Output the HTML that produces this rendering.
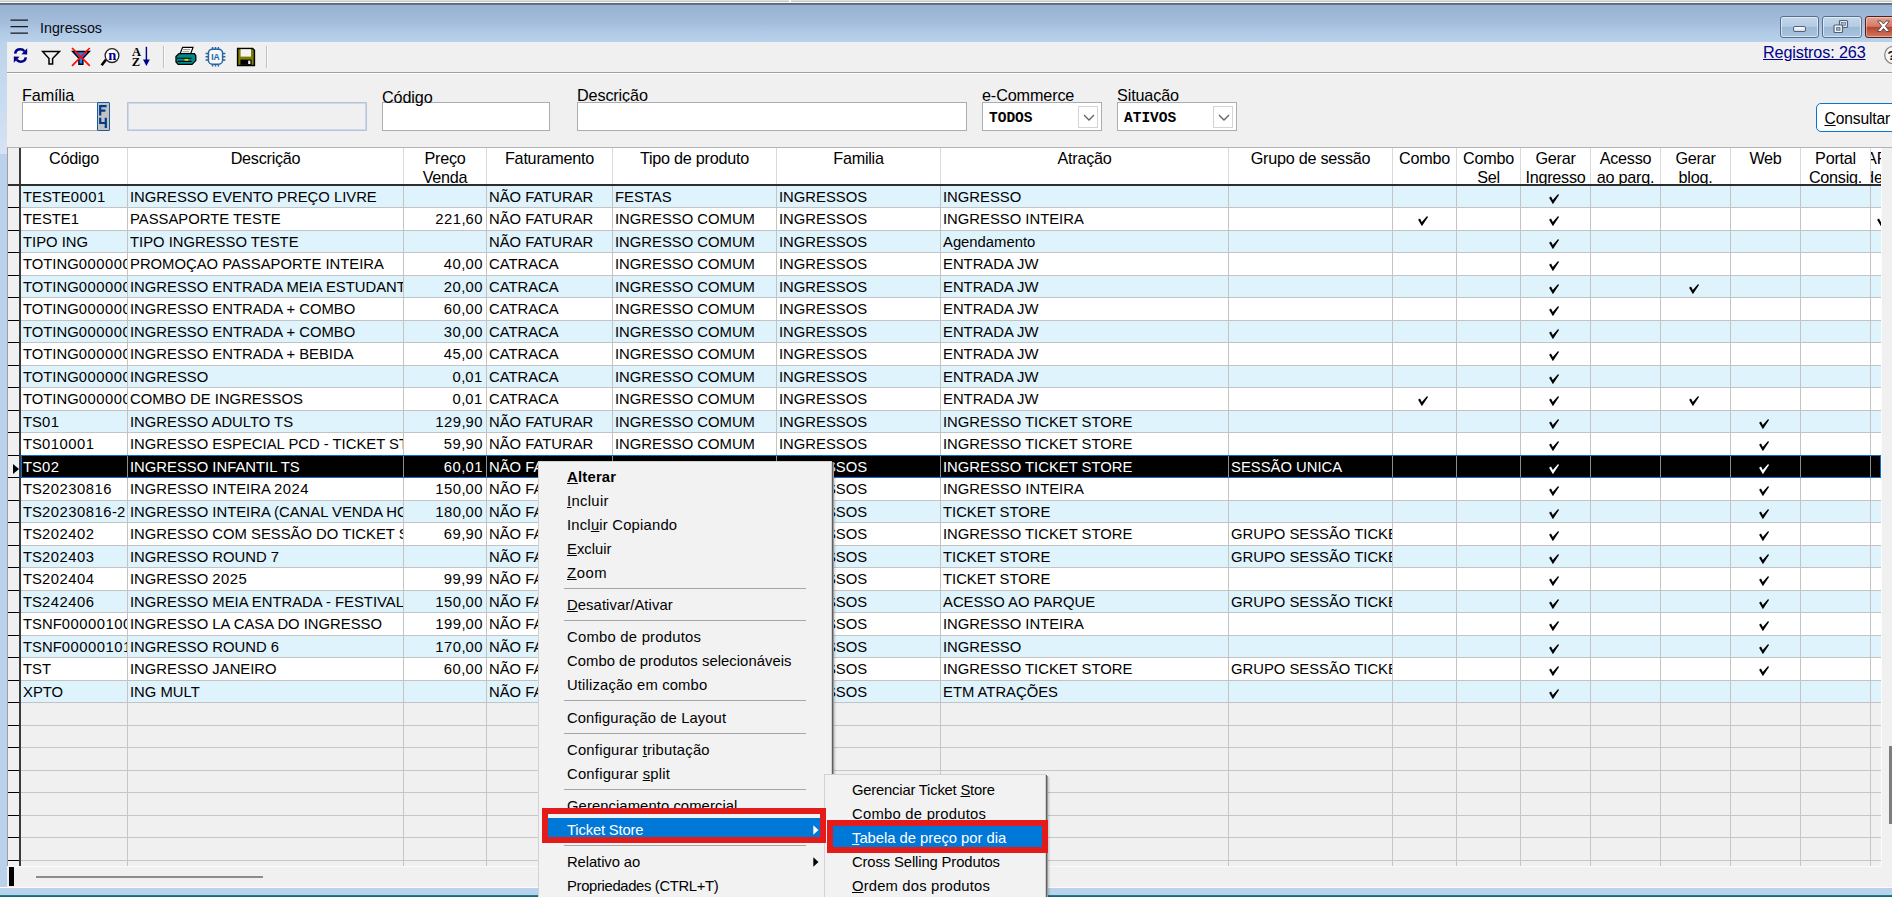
<!DOCTYPE html>
<html lang="pt-BR"><head><meta charset="utf-8"><title>Ingressos</title>
<style>
*{box-sizing:border-box;margin:0;padding:0}
html,body{width:1892px;height:897px;overflow:hidden}
body{position:relative;background:#b9d1ea;font-family:"Liberation Sans",sans-serif;color:#000}
.abs,.abs>*{position:absolute}
#top0{left:0;top:0;width:1892px;height:5px;background:linear-gradient(#e2e2e2 0,#dcdcdc 1px,#c4c4c4 1.6px,#fafafa 2px,#fafafa 3px,#5f6a76 3.2px,#5f6a76 4.4px,#8fa9c6 5px)}
#topdiv{left:789px;top:0;width:2px;height:3px;background:#fff}
#title{left:0;top:5px;width:1892px;height:37px;background:linear-gradient(#98b3d2 0,#a2bcda 45%,#b0cae6 75%,#b9d1ea 100%)}
#ttext{left:40px;top:19px;font-size:14.3px;line-height:18px;color:#0a0a14;white-space:nowrap}
#client{left:7px;top:42px;width:1885px;height:845px;background:#f0f0f0}
#tbline{left:7px;top:72px;width:1885px;height:2px;background:linear-gradient(#a0a0a0 0,#a0a0a0 50%,#fff 50%)}
.lbl{font-size:16.2px;letter-spacing:-.13px;line-height:18px;white-space:nowrap;color:#000}
.inp{background:#fff;border:1px solid #abadb3}
.cb{background:#fff;border:1px solid #abadb3}
.cb b{position:absolute;left:6px;top:6px;font:bold 14.5px/18px "Liberation Mono",monospace}
.cb i{position:absolute;right:3px;top:3px;width:20px;height:22px;border:1px solid #d4d4d4;background:#fff}
.cb i svg{position:absolute;left:4px;top:7px}
#grid{left:7px;top:147px;width:1875px;height:720px;background:#f0f0f0;overflow:hidden;border-left:1px solid #a0a0a0;border-top:1px solid #b4b4b4}
.hd{top:148px;height:36px;background:#fff;border-right:1px solid #d9d9d9;font-size:16.2px;letter-spacing:-.25px;line-height:18.5px;text-align:center;padding-top:1px;white-space:nowrap;overflow:hidden}
.r{left:21px;width:1860px;height:23px}
.c{position:absolute;top:0;height:100%;border-right:1px solid #c3c3c3;border-bottom:1px solid #c3c3c3;font-size:15.5px;line-height:22px;padding-left:2px;white-space:nowrap;overflow:hidden}
.c.n{text-align:right;padding-right:3px}
.c.k{text-align:center;padding:0}
.c i{font-style:normal;letter-spacing:.54px}
.c>span{display:inline-block;transform:scaleX(.956);transform-origin:0 50%}
.c.n>span{transform-origin:100% 50%}
.b .c{background:#dff3fd}
.w .c{background:#fff}
.e .c{background:#f0f0f0;border-color:#c6c6c6}
.s .c{background:#000;color:#fff;border-color:#000;border-right-color:#8e8e8e}
.ck{width:10px;height:10px;margin:8px 4px 0 0;fill:#000}
.s .ck{fill:#fff}
.ind{left:8px;width:11px;height:1px;background:#000}
.menu{background:#f2f2f2;border:1px solid #d2d2d2;box-shadow:1px 1px 0 0 #5f5f5f, 2px 2px 0 0 #9a9a9a, 3px 3px 2px rgba(0,0,0,.2)}
.mi{position:absolute;left:28px;height:24px;font-size:14.8px;line-height:24px;white-space:nowrap;color:#000}
.mi u{text-decoration:underline;text-underline-offset:1px}
.ms{position:absolute;left:25px;height:1px;background:#a6a6a6}
.red{border:6px solid #e41b1b}
</style></head><body class="abs">
<div id="top0"></div><div id="topdiv"></div>
<div id="title"></div>
<svg style="left:10px;top:19px" width="19" height="16" viewBox="0 0 19 16"><path d="M0.5,1.2H18 M0.5,7.7H18 M0.5,14.2H18" stroke="#1a1a1a" stroke-width="1.3" fill="none"/></svg>
<div id="ttext">Ingressos</div>

<div style="left:1780px;top:16px;width:39px;height:22px;border:1px solid #54708f;border-radius:3px;background:linear-gradient(#c3d6ea 0,#b6cce4 47%,#9cb8d6 50%,#a9c4e0 100%);box-shadow:inset 0 0 0 1px rgba(255,255,255,.55)"></div>
<div style="left:1793px;top:26px;width:13px;height:6px;border:1px solid #50617a;border-radius:2px;background:linear-gradient(#fff,#d8dde4)"></div>
<div style="left:1822px;top:16px;width:40px;height:22px;border:1px solid #54708f;border-radius:3px;background:linear-gradient(#c3d6ea 0,#b6cce4 47%,#9cb8d6 50%,#a9c4e0 100%);box-shadow:inset 0 0 0 1px rgba(255,255,255,.55)"></div>
<svg style="left:1833px;top:19px" width="16" height="15" viewBox="0 0 16 15"><rect x="6.5" y="1.5" width="8" height="7" rx="1" fill="#e8edf3" stroke="#50617a" stroke-width="1.2"/><rect x="8.6" y="3.6" width="3.8" height="2.8" fill="#9cb8d6" stroke="#50617a" stroke-width=".6"/><rect x="1" y="6" width="8.5" height="7.5" rx="1" fill="#f4f6f9" stroke="#50617a" stroke-width="1.2"/><rect x="3.6" y="8.6" width="3.4" height="2.6" fill="#9cb8d6" stroke="#50617a" stroke-width=".8"/></svg>
<div style="left:1865px;top:16px;width:40px;height:22px;border:1px solid #5c1a14;border-radius:3px;background:linear-gradient(#e3a394 0,#d47a66 47%,#b8432a 50%,#cf7761 100%);box-shadow:inset 0 0 0 1px rgba(255,255,255,.4)"></div>
<svg style="left:1876px;top:20px" width="16" height="13" viewBox="0 0 16 13"><path d="M1.5,1 L5,1 L7.5,4 L10,1 L13.5,1 L9.4,6.2 L13.8,11.5 L10,11.5 L7.5,8.4 L5,11.5 L1.2,11.5 L5.6,6.2 Z" fill="#fff" stroke="#5e4a4a" stroke-width="1"/></svg>

<div style="left:0;top:42px;width:7px;height:112px;background:linear-gradient(#bcd3eb,#d6e3f3)"></div>
<div id="client"></div><div id="tbline"></div>
<svg style="left:13px;top:47px" width="15" height="17" viewBox="0 0 15 17"><g fill="none" stroke="#00008b" stroke-width="2.6"><path d="M2.2,6.6 C2.6,3.6 5,2.3 7.4,2.3 C9,2.3 10.4,3 11.3,4.2"/><path d="M12.8,10.4 C12.4,13.4 10,14.7 7.6,14.7 C6,14.7 4.6,14 3.7,12.8"/></g><path d="M14.2,1.2 L14.2,7.6 L8.4,7.2 Z" fill="#00008b"/><path d="M0.8,15.8 L0.8,9.4 L6.6,9.8 Z" fill="#00008b"/></svg>
<svg style="left:41px;top:50px" width="20" height="16" viewBox="0 0 20 16"><path d="M1.6,1.5 H18.4 L11.6,8.6 V14 H8 V8.6 Z" fill="none" stroke="#000" stroke-width="1.5" stroke-linejoin="miter"/></svg>
<svg style="left:71px;top:47px" width="20" height="20" viewBox="0 0 20 20"><path d="M1.6,4.5 H18.4 L11.9,11.2 V17.2 H7.9 V11.2 Z" fill="#1087ff" stroke="#000" stroke-width="1.4"/><path d="M1,1 L18.8,18.8 M18.8,1 L1,18.8" stroke="#ff0a0a" stroke-width="1.7"/></svg>
<svg style="left:100px;top:47px" width="21" height="20" viewBox="0 0 21 20"><path d="M6,12.6 L1.6,18.2" stroke="#000" stroke-width="2.6" stroke-linecap="butt"/><circle cx="12" cy="8.6" r="6.9" fill="#fff" stroke="#222" stroke-width="1.3"/><text x="12.2" y="12.6" text-anchor="middle" font-family="Liberation Serif, serif" font-weight="bold" font-size="14.5" fill="#00008b">n</text></svg>
<svg style="left:131px;top:45px" width="20" height="23" viewBox="0 0 20 23"><text x="5.4" y="10.6" text-anchor="middle" font-family="Liberation Serif, serif" font-weight="bold" font-size="12.5" fill="#000">A</text><text x="5" y="20.8" text-anchor="middle" font-family="Liberation Serif, serif" font-weight="bold" font-size="12.5" fill="#000">Z</text><path d="M15.4,1.8 V18" stroke="#00008b" stroke-width="1.4"/><path d="M12,14.6 H18.8 L15.4,21 Z" fill="#00008b"/></svg>
<div style="left:163px;top:46px;width:2px;height:22px;background:linear-gradient(90deg,#c0c0c0 50%,#fafafa 50%)"></div>
<svg style="left:175px;top:46px" width="22" height="20" viewBox="0 0 22 20"><path d="M5,8 L7.6,1.4 H18 L15.6,8 Z" fill="#fff" stroke="#000" stroke-width="1.2"/><path d="M8.2,3.6 H15.2 M7.4,5.8 H14.4" stroke="#8a8a8a" stroke-width="1"/><path d="M1,10.4 L4,7.6 H19.4 L20.8,9.6 V14.6 L17,18.4 H3.2 L1,16 Z" fill="#008b8b" stroke="#000" stroke-width="1.3"/><path d="M2,12.2 H16.8 M2.6,15.4 H16.6" stroke="#000" stroke-width="1.1"/><rect x="9.6" y="12.9" width="3.6" height="1.8" fill="#e0e000"/></svg>
<svg style="left:204px;top:46px" width="23" height="21" viewBox="0 0 23 21"><rect x="4.4" y="3.2" width="14.2" height="15" rx="4" fill="#f4f7fb" stroke="#2b64a0" stroke-width="1.5"/><path d="M8.6,1 V3 M11.5,1 V3 M14.4,1 V3 M8.6,18.4 V20.4 M11.5,18.4 V20.4 M14.4,18.4 V20.4 M1.6,7.4 H4 M1.6,10.7 H4 M1.6,14 H4 M19,7.4 H21.4 M19,10.7 H21.4 M19,14 H21.4" stroke="#2b64a0" stroke-width="1.5"/><text x="11.5" y="13.8" text-anchor="middle" font-family="Liberation Sans, sans-serif" font-weight="bold" font-size="8.6" fill="#2b64a0">IA</text></svg>
<svg style="left:236px;top:47px" width="20" height="20" viewBox="0 0 20 20"><path d="M1.6,1.4 H16.6 L18.4,3.2 V18.4 H1.6 Z" fill="#808000" stroke="#000" stroke-width="1.5"/><rect x="4.6" y="2.2" width="10.4" height="7.4" fill="#f4f4f4"/><rect x="4.4" y="12.6" width="11.2" height="5.2" fill="#000"/><rect x="12.2" y="13.6" width="2.2" height="3.4" fill="#f4f4f4"/></svg>
<div style="left:266px;top:46px;width:2px;height:22px;background:linear-gradient(90deg,#c0c0c0 50%,#fafafa 50%)"></div>

<div class="lbl" style="left:1763px;top:43px;color:#00008b;text-decoration:underline;text-underline-offset:1px">Registros: 263</div>
<svg style="left:1883px;top:45px" width="17" height="20" viewBox="0 0 17 20"><circle cx="10.5" cy="10" r="8.8" fill="#f7f7f7" stroke="#8a8a8a" stroke-width="1.3"/><text x="4.5" y="14.5" font-family="Liberation Sans, sans-serif" font-weight="bold" font-size="13" fill="#111">?</text></svg>

<div class="lbl" style="left:22px;top:86px">Família</div>
<div class="inp" style="left:22px;top:102px;width:76px;height:29px"></div>
<div style="left:97px;top:102px;width:13px;height:29px;border:1.5px solid #1c5a9e;border-radius:1px;background:#c3c3c3"></div>
<svg style="left:99px;top:105px" width="9" height="24" viewBox="0 0 9 24"><path d="M1.2,10.5 V1.2 H7.6 M1.2,5.6 H6.4" stroke="#003c8c" stroke-width="2.2" fill="none"/><path d="M1.2,12.8 V18 H7 M6.8,12.8 V23" stroke="#003c8c" stroke-width="2.2" fill="none"/></svg>
<div style="left:127px;top:102px;width:240px;height:29px;border:1px solid #b9c4d4;background:#f0f0f0;box-shadow:inset 0 0 0 1px #c9daf0"></div>
<div class="inp" style="left:382px;top:102px;width:168px;height:29px"></div>
<div class="lbl" style="left:382px;top:88px">Código</div>
<div class="lbl" style="left:577px;top:86px">Descrição</div>
<div class="inp" style="left:577px;top:102px;width:390px;height:29px"></div>
<div class="lbl" style="left:982px;top:86px">e-Commerce</div>
<div class="cb" style="left:982px;top:102px;width:120px;height:29px"><b>TODOS</b><i><svg width="12" height="7" viewBox="0 0 12 7"><path d="M1,1 L6,6 L11,1" fill="none" stroke="#606060" stroke-width="1.3"/></svg></i></div>
<div class="lbl" style="left:1117px;top:86px">Situação</div>
<div class="cb" style="left:1117px;top:102px;width:120px;height:29px"><b>ATIVOS</b><i><svg width="12" height="7" viewBox="0 0 12 7"><path d="M1,1 L6,6 L11,1" fill="none" stroke="#606060" stroke-width="1.3"/></svg></i></div>
<div style="left:1816px;top:103px;width:90px;height:29px;border:1.5px solid #0078d7;border-radius:5px;background:#fff"></div>
<div class="lbl" style="left:1824.5px;top:109.5px;font-size:15.6px"><u>C</u>onsultar</div>

<div id="grid"></div>
<div style="left:8px;top:148px;width:11px;height:718px;background:#f0f0f0"></div>
<div style="left:19px;top:148px;width:2px;height:718px;background:#3a3a3a"></div>
<div class="hd" style="left:21px;width:107px">Código</div>
<div class="hd" style="left:128px;width:276px">Descrição</div>
<div class="hd" style="left:404px;width:83px">Preço<br>Venda</div>
<div class="hd" style="left:487px;width:126px">Faturamento</div>
<div class="hd" style="left:613px;width:164px">Tipo de produto</div>
<div class="hd" style="left:777px;width:164px">Familia</div>
<div class="hd" style="left:941px;width:288px">Atração</div>
<div class="hd" style="left:1229px;width:164px">Grupo de sessão</div>
<div class="hd" style="left:1393px;width:64px">Combo</div>
<div class="hd" style="left:1457px;width:64px">Combo<br>Sel</div>
<div class="hd" style="left:1521px;width:70px">Gerar<br>Ingresso</div>
<div class="hd" style="left:1591px;width:70px">Acesso<br>ao parq.</div>
<div class="hd" style="left:1661px;width:70px">Gerar<br>bloq.</div>
<div class="hd" style="left:1731px;width:70px">Web</div>
<div class="hd" style="left:1801px;width:70px">Portal<br>Consig.</div>
<div class="hd" style="left:1871px;width:11px"></div>
<div style="left:1871px;top:149px;width:10px;height:35px;overflow:hidden;font-size:16.2px;line-height:18.5px;white-space:nowrap"><div style="position:absolute;left:-5px;top:0">AFC<br><span style="margin-left:-1px">de</span></div></div>
<div style="left:8px;top:184px;width:1873px;height:2px;background:#2e2e2e"></div>
<div class="r b" style="top:186px;height:22px"><div class="c d" style="left:0px;width:107px"><span>TESTE<i>0001</i></span></div><div class="c" style="left:107px;width:276px"><span>INGRESSO EVENTO PREÇO LIVRE</span></div><div class="c n d" style="left:383px;width:83px"></div><div class="c" style="left:466px;width:126px"><span>NÃO FATURAR</span></div><div class="c" style="left:592px;width:164px"><span>FESTAS</span></div><div class="c" style="left:756px;width:164px"><span>INGRESSOS</span></div><div class="c" style="left:920px;width:288px"><span>INGRESSO</span></div><div class="c" style="left:1208px;width:164px"></div><div class="c k" style="left:1372px;width:64px"></div><div class="c k" style="left:1436px;width:64px"></div><div class="c k" style="left:1500px;width:70px"><svg class="ck" viewBox="0 0 10 10"><path d="M0.1,3.7 L2.0,2.6 L3.8,5.9 L9.1,0 L10,0.9 L3.9,10.2 Z"/></svg></div><div class="c k" style="left:1570px;width:70px"></div><div class="c k" style="left:1640px;width:70px"></div><div class="c k" style="left:1710px;width:70px"></div><div class="c k" style="left:1780px;width:70px"></div><div class="c k" style="left:1850px;width:11px;text-align:left;padding-left:6px"></div></div>
<div class="ind" style="top:207px"></div>
<div class="r w" style="top:208px;height:23px"><div class="c d" style="left:0px;width:107px"><span>TESTE<i>1</i></span></div><div class="c" style="left:107px;width:276px"><span>PASSAPORTE TESTE</span></div><div class="c n d" style="left:383px;width:83px"><span><i>221</i>,<i>60</i></span></div><div class="c" style="left:466px;width:126px"><span>NÃO FATURAR</span></div><div class="c" style="left:592px;width:164px"><span>INGRESSO COMUM</span></div><div class="c" style="left:756px;width:164px"><span>INGRESSOS</span></div><div class="c" style="left:920px;width:288px"><span>INGRESSO INTEIRA</span></div><div class="c" style="left:1208px;width:164px"></div><div class="c k" style="left:1372px;width:64px"><svg class="ck" viewBox="0 0 10 10"><path d="M0.1,3.7 L2.0,2.6 L3.8,5.9 L9.1,0 L10,0.9 L3.9,10.2 Z"/></svg></div><div class="c k" style="left:1436px;width:64px"></div><div class="c k" style="left:1500px;width:70px"><svg class="ck" viewBox="0 0 10 10"><path d="M0.1,3.7 L2.0,2.6 L3.8,5.9 L9.1,0 L10,0.9 L3.9,10.2 Z"/></svg></div><div class="c k" style="left:1570px;width:70px"></div><div class="c k" style="left:1640px;width:70px"></div><div class="c k" style="left:1710px;width:70px"></div><div class="c k" style="left:1780px;width:70px"></div><div class="c k" style="left:1850px;width:11px;text-align:left;padding-left:6px"><svg class="ck" viewBox="0 0 10 10"><path d="M0.1,3.7 L2.0,2.6 L3.8,5.9 L9.1,0 L10,0.9 L3.9,10.2 Z"/></svg></div></div>
<div class="ind" style="top:230px"></div>
<div class="r b" style="top:231px;height:22px"><div class="c d" style="left:0px;width:107px"><span>TIPO ING</span></div><div class="c" style="left:107px;width:276px"><span>TIPO INGRESSO TESTE</span></div><div class="c n d" style="left:383px;width:83px"></div><div class="c" style="left:466px;width:126px"><span>NÃO FATURAR</span></div><div class="c" style="left:592px;width:164px"><span>INGRESSO COMUM</span></div><div class="c" style="left:756px;width:164px"><span>INGRESSOS</span></div><div class="c" style="left:920px;width:288px"><span>Agendamento</span></div><div class="c" style="left:1208px;width:164px"></div><div class="c k" style="left:1372px;width:64px"></div><div class="c k" style="left:1436px;width:64px"></div><div class="c k" style="left:1500px;width:70px"><svg class="ck" viewBox="0 0 10 10"><path d="M0.1,3.7 L2.0,2.6 L3.8,5.9 L9.1,0 L10,0.9 L3.9,10.2 Z"/></svg></div><div class="c k" style="left:1570px;width:70px"></div><div class="c k" style="left:1640px;width:70px"></div><div class="c k" style="left:1710px;width:70px"></div><div class="c k" style="left:1780px;width:70px"></div><div class="c k" style="left:1850px;width:11px;text-align:left;padding-left:6px"></div></div>
<div class="ind" style="top:252px"></div>
<div class="r w" style="top:253px;height:23px"><div class="c d" style="left:0px;width:107px"><span>TOTING<i>0000001</i></span></div><div class="c" style="left:107px;width:276px"><span>PROMOÇAO PASSAPORTE INTEIRA</span></div><div class="c n d" style="left:383px;width:83px"><span><i>40</i>,<i>00</i></span></div><div class="c" style="left:466px;width:126px"><span>CATRACA</span></div><div class="c" style="left:592px;width:164px"><span>INGRESSO COMUM</span></div><div class="c" style="left:756px;width:164px"><span>INGRESSOS</span></div><div class="c" style="left:920px;width:288px"><span>ENTRADA JW</span></div><div class="c" style="left:1208px;width:164px"></div><div class="c k" style="left:1372px;width:64px"></div><div class="c k" style="left:1436px;width:64px"></div><div class="c k" style="left:1500px;width:70px"><svg class="ck" viewBox="0 0 10 10"><path d="M0.1,3.7 L2.0,2.6 L3.8,5.9 L9.1,0 L10,0.9 L3.9,10.2 Z"/></svg></div><div class="c k" style="left:1570px;width:70px"></div><div class="c k" style="left:1640px;width:70px"></div><div class="c k" style="left:1710px;width:70px"></div><div class="c k" style="left:1780px;width:70px"></div><div class="c k" style="left:1850px;width:11px;text-align:left;padding-left:6px"></div></div>
<div class="ind" style="top:275px"></div>
<div class="r b" style="top:276px;height:22px"><div class="c d" style="left:0px;width:107px"><span>TOTING<i>0000002</i></span></div><div class="c" style="left:107px;width:276px"><span>INGRESSO ENTRADA MEIA ESTUDANTE</span></div><div class="c n d" style="left:383px;width:83px"><span><i>20</i>,<i>00</i></span></div><div class="c" style="left:466px;width:126px"><span>CATRACA</span></div><div class="c" style="left:592px;width:164px"><span>INGRESSO COMUM</span></div><div class="c" style="left:756px;width:164px"><span>INGRESSOS</span></div><div class="c" style="left:920px;width:288px"><span>ENTRADA JW</span></div><div class="c" style="left:1208px;width:164px"></div><div class="c k" style="left:1372px;width:64px"></div><div class="c k" style="left:1436px;width:64px"></div><div class="c k" style="left:1500px;width:70px"><svg class="ck" viewBox="0 0 10 10"><path d="M0.1,3.7 L2.0,2.6 L3.8,5.9 L9.1,0 L10,0.9 L3.9,10.2 Z"/></svg></div><div class="c k" style="left:1570px;width:70px"></div><div class="c k" style="left:1640px;width:70px"><svg class="ck" viewBox="0 0 10 10"><path d="M0.1,3.7 L2.0,2.6 L3.8,5.9 L9.1,0 L10,0.9 L3.9,10.2 Z"/></svg></div><div class="c k" style="left:1710px;width:70px"></div><div class="c k" style="left:1780px;width:70px"></div><div class="c k" style="left:1850px;width:11px;text-align:left;padding-left:6px"></div></div>
<div class="ind" style="top:297px"></div>
<div class="r w" style="top:298px;height:23px"><div class="c d" style="left:0px;width:107px"><span>TOTING<i>0000003</i></span></div><div class="c" style="left:107px;width:276px"><span>INGRESSO ENTRADA + COMBO</span></div><div class="c n d" style="left:383px;width:83px"><span><i>60</i>,<i>00</i></span></div><div class="c" style="left:466px;width:126px"><span>CATRACA</span></div><div class="c" style="left:592px;width:164px"><span>INGRESSO COMUM</span></div><div class="c" style="left:756px;width:164px"><span>INGRESSOS</span></div><div class="c" style="left:920px;width:288px"><span>ENTRADA JW</span></div><div class="c" style="left:1208px;width:164px"></div><div class="c k" style="left:1372px;width:64px"></div><div class="c k" style="left:1436px;width:64px"></div><div class="c k" style="left:1500px;width:70px"><svg class="ck" viewBox="0 0 10 10"><path d="M0.1,3.7 L2.0,2.6 L3.8,5.9 L9.1,0 L10,0.9 L3.9,10.2 Z"/></svg></div><div class="c k" style="left:1570px;width:70px"></div><div class="c k" style="left:1640px;width:70px"></div><div class="c k" style="left:1710px;width:70px"></div><div class="c k" style="left:1780px;width:70px"></div><div class="c k" style="left:1850px;width:11px;text-align:left;padding-left:6px"></div></div>
<div class="ind" style="top:320px"></div>
<div class="r b" style="top:321px;height:22px"><div class="c d" style="left:0px;width:107px"><span>TOTING<i>0000004</i></span></div><div class="c" style="left:107px;width:276px"><span>INGRESSO ENTRADA + COMBO</span></div><div class="c n d" style="left:383px;width:83px"><span><i>30</i>,<i>00</i></span></div><div class="c" style="left:466px;width:126px"><span>CATRACA</span></div><div class="c" style="left:592px;width:164px"><span>INGRESSO COMUM</span></div><div class="c" style="left:756px;width:164px"><span>INGRESSOS</span></div><div class="c" style="left:920px;width:288px"><span>ENTRADA JW</span></div><div class="c" style="left:1208px;width:164px"></div><div class="c k" style="left:1372px;width:64px"></div><div class="c k" style="left:1436px;width:64px"></div><div class="c k" style="left:1500px;width:70px"><svg class="ck" viewBox="0 0 10 10"><path d="M0.1,3.7 L2.0,2.6 L3.8,5.9 L9.1,0 L10,0.9 L3.9,10.2 Z"/></svg></div><div class="c k" style="left:1570px;width:70px"></div><div class="c k" style="left:1640px;width:70px"></div><div class="c k" style="left:1710px;width:70px"></div><div class="c k" style="left:1780px;width:70px"></div><div class="c k" style="left:1850px;width:11px;text-align:left;padding-left:6px"></div></div>
<div class="ind" style="top:342px"></div>
<div class="r w" style="top:343px;height:23px"><div class="c d" style="left:0px;width:107px"><span>TOTING<i>0000005</i></span></div><div class="c" style="left:107px;width:276px"><span>INGRESSO ENTRADA + BEBIDA</span></div><div class="c n d" style="left:383px;width:83px"><span><i>45</i>,<i>00</i></span></div><div class="c" style="left:466px;width:126px"><span>CATRACA</span></div><div class="c" style="left:592px;width:164px"><span>INGRESSO COMUM</span></div><div class="c" style="left:756px;width:164px"><span>INGRESSOS</span></div><div class="c" style="left:920px;width:288px"><span>ENTRADA JW</span></div><div class="c" style="left:1208px;width:164px"></div><div class="c k" style="left:1372px;width:64px"></div><div class="c k" style="left:1436px;width:64px"></div><div class="c k" style="left:1500px;width:70px"><svg class="ck" viewBox="0 0 10 10"><path d="M0.1,3.7 L2.0,2.6 L3.8,5.9 L9.1,0 L10,0.9 L3.9,10.2 Z"/></svg></div><div class="c k" style="left:1570px;width:70px"></div><div class="c k" style="left:1640px;width:70px"></div><div class="c k" style="left:1710px;width:70px"></div><div class="c k" style="left:1780px;width:70px"></div><div class="c k" style="left:1850px;width:11px;text-align:left;padding-left:6px"></div></div>
<div class="ind" style="top:365px"></div>
<div class="r b" style="top:366px;height:22px"><div class="c d" style="left:0px;width:107px"><span>TOTING<i>0000006</i></span></div><div class="c" style="left:107px;width:276px"><span>INGRESSO</span></div><div class="c n d" style="left:383px;width:83px"><span><i>0</i>,<i>01</i></span></div><div class="c" style="left:466px;width:126px"><span>CATRACA</span></div><div class="c" style="left:592px;width:164px"><span>INGRESSO COMUM</span></div><div class="c" style="left:756px;width:164px"><span>INGRESSOS</span></div><div class="c" style="left:920px;width:288px"><span>ENTRADA JW</span></div><div class="c" style="left:1208px;width:164px"></div><div class="c k" style="left:1372px;width:64px"></div><div class="c k" style="left:1436px;width:64px"></div><div class="c k" style="left:1500px;width:70px"><svg class="ck" viewBox="0 0 10 10"><path d="M0.1,3.7 L2.0,2.6 L3.8,5.9 L9.1,0 L10,0.9 L3.9,10.2 Z"/></svg></div><div class="c k" style="left:1570px;width:70px"></div><div class="c k" style="left:1640px;width:70px"></div><div class="c k" style="left:1710px;width:70px"></div><div class="c k" style="left:1780px;width:70px"></div><div class="c k" style="left:1850px;width:11px;text-align:left;padding-left:6px"></div></div>
<div class="ind" style="top:387px"></div>
<div class="r w" style="top:388px;height:23px"><div class="c d" style="left:0px;width:107px"><span>TOTING<i>0000007</i></span></div><div class="c" style="left:107px;width:276px"><span>COMBO DE INGRESSOS</span></div><div class="c n d" style="left:383px;width:83px"><span><i>0</i>,<i>01</i></span></div><div class="c" style="left:466px;width:126px"><span>CATRACA</span></div><div class="c" style="left:592px;width:164px"><span>INGRESSO COMUM</span></div><div class="c" style="left:756px;width:164px"><span>INGRESSOS</span></div><div class="c" style="left:920px;width:288px"><span>ENTRADA JW</span></div><div class="c" style="left:1208px;width:164px"></div><div class="c k" style="left:1372px;width:64px"><svg class="ck" viewBox="0 0 10 10"><path d="M0.1,3.7 L2.0,2.6 L3.8,5.9 L9.1,0 L10,0.9 L3.9,10.2 Z"/></svg></div><div class="c k" style="left:1436px;width:64px"></div><div class="c k" style="left:1500px;width:70px"><svg class="ck" viewBox="0 0 10 10"><path d="M0.1,3.7 L2.0,2.6 L3.8,5.9 L9.1,0 L10,0.9 L3.9,10.2 Z"/></svg></div><div class="c k" style="left:1570px;width:70px"></div><div class="c k" style="left:1640px;width:70px"><svg class="ck" viewBox="0 0 10 10"><path d="M0.1,3.7 L2.0,2.6 L3.8,5.9 L9.1,0 L10,0.9 L3.9,10.2 Z"/></svg></div><div class="c k" style="left:1710px;width:70px"></div><div class="c k" style="left:1780px;width:70px"></div><div class="c k" style="left:1850px;width:11px;text-align:left;padding-left:6px"></div></div>
<div class="ind" style="top:410px"></div>
<div class="r b" style="top:411px;height:22px"><div class="c d" style="left:0px;width:107px"><span>TS<i>01</i></span></div><div class="c" style="left:107px;width:276px"><span>INGRESSO ADULTO TS</span></div><div class="c n d" style="left:383px;width:83px"><span><i>129</i>,<i>90</i></span></div><div class="c" style="left:466px;width:126px"><span>NÃO FATURAR</span></div><div class="c" style="left:592px;width:164px"><span>INGRESSO COMUM</span></div><div class="c" style="left:756px;width:164px"><span>INGRESSOS</span></div><div class="c" style="left:920px;width:288px"><span>INGRESSO TICKET STORE</span></div><div class="c" style="left:1208px;width:164px"></div><div class="c k" style="left:1372px;width:64px"></div><div class="c k" style="left:1436px;width:64px"></div><div class="c k" style="left:1500px;width:70px"><svg class="ck" viewBox="0 0 10 10"><path d="M0.1,3.7 L2.0,2.6 L3.8,5.9 L9.1,0 L10,0.9 L3.9,10.2 Z"/></svg></div><div class="c k" style="left:1570px;width:70px"></div><div class="c k" style="left:1640px;width:70px"></div><div class="c k" style="left:1710px;width:70px"><svg class="ck" viewBox="0 0 10 10"><path d="M0.1,3.7 L2.0,2.6 L3.8,5.9 L9.1,0 L10,0.9 L3.9,10.2 Z"/></svg></div><div class="c k" style="left:1780px;width:70px"></div><div class="c k" style="left:1850px;width:11px;text-align:left;padding-left:6px"></div></div>
<div class="ind" style="top:432px"></div>
<div class="r w" style="top:433px;height:23px"><div class="c d" style="left:0px;width:107px"><span>TS<i>010001</i></span></div><div class="c" style="left:107px;width:276px"><span>INGRESSO ESPECIAL PCD - TICKET STORE</span></div><div class="c n d" style="left:383px;width:83px"><span><i>59</i>,<i>90</i></span></div><div class="c" style="left:466px;width:126px"><span>NÃO FATURAR</span></div><div class="c" style="left:592px;width:164px"><span>INGRESSO COMUM</span></div><div class="c" style="left:756px;width:164px"><span>INGRESSOS</span></div><div class="c" style="left:920px;width:288px"><span>INGRESSO TICKET STORE</span></div><div class="c" style="left:1208px;width:164px"></div><div class="c k" style="left:1372px;width:64px"></div><div class="c k" style="left:1436px;width:64px"></div><div class="c k" style="left:1500px;width:70px"><svg class="ck" viewBox="0 0 10 10"><path d="M0.1,3.7 L2.0,2.6 L3.8,5.9 L9.1,0 L10,0.9 L3.9,10.2 Z"/></svg></div><div class="c k" style="left:1570px;width:70px"></div><div class="c k" style="left:1640px;width:70px"></div><div class="c k" style="left:1710px;width:70px"><svg class="ck" viewBox="0 0 10 10"><path d="M0.1,3.7 L2.0,2.6 L3.8,5.9 L9.1,0 L10,0.9 L3.9,10.2 Z"/></svg></div><div class="c k" style="left:1780px;width:70px"></div><div class="c k" style="left:1850px;width:11px;text-align:left;padding-left:6px"></div></div>
<div class="ind" style="top:455px"></div>
<div class="r s" style="top:456px;height:22px"><div class="c d" style="left:0px;width:107px"><span>TS<i>02</i></span></div><div class="c" style="left:107px;width:276px"><span>INGRESSO INFANTIL TS</span></div><div class="c n d" style="left:383px;width:83px"><span><i>60</i>,<i>01</i></span></div><div class="c" style="left:466px;width:126px"><span>NÃO FATURAR</span></div><div class="c" style="left:592px;width:164px"><span>INGRESSO COMUM</span></div><div class="c" style="left:756px;width:164px"><span>INGRESSOS</span></div><div class="c" style="left:920px;width:288px"><span>INGRESSO TICKET STORE</span></div><div class="c" style="left:1208px;width:164px"><span>SESSÃO UNICA</span></div><div class="c k" style="left:1372px;width:64px"></div><div class="c k" style="left:1436px;width:64px"></div><div class="c k" style="left:1500px;width:70px"><svg class="ck" viewBox="0 0 10 10"><path d="M0.1,3.7 L2.0,2.6 L3.8,5.9 L9.1,0 L10,0.9 L3.9,10.2 Z"/></svg></div><div class="c k" style="left:1570px;width:70px"></div><div class="c k" style="left:1640px;width:70px"></div><div class="c k" style="left:1710px;width:70px"><svg class="ck" viewBox="0 0 10 10"><path d="M0.1,3.7 L2.0,2.6 L3.8,5.9 L9.1,0 L10,0.9 L3.9,10.2 Z"/></svg></div><div class="c k" style="left:1780px;width:70px"></div><div class="c k" style="left:1850px;width:11px;text-align:left;padding-left:6px"></div></div>
<div class="ind" style="top:477px"></div>
<div class="r w" style="top:478px;height:23px"><div class="c d" style="left:0px;width:107px"><span>TS<i>20230816</i></span></div><div class="c" style="left:107px;width:276px"><span>INGRESSO INTEIRA <i>2024</i></span></div><div class="c n d" style="left:383px;width:83px"><span><i>150</i>,<i>00</i></span></div><div class="c" style="left:466px;width:126px"><span>NÃO FATURAR</span></div><div class="c" style="left:592px;width:164px"><span>INGRESSO COMUM</span></div><div class="c" style="left:756px;width:164px"><span>INGRESSOS</span></div><div class="c" style="left:920px;width:288px"><span>INGRESSO INTEIRA</span></div><div class="c" style="left:1208px;width:164px"></div><div class="c k" style="left:1372px;width:64px"></div><div class="c k" style="left:1436px;width:64px"></div><div class="c k" style="left:1500px;width:70px"><svg class="ck" viewBox="0 0 10 10"><path d="M0.1,3.7 L2.0,2.6 L3.8,5.9 L9.1,0 L10,0.9 L3.9,10.2 Z"/></svg></div><div class="c k" style="left:1570px;width:70px"></div><div class="c k" style="left:1640px;width:70px"></div><div class="c k" style="left:1710px;width:70px"><svg class="ck" viewBox="0 0 10 10"><path d="M0.1,3.7 L2.0,2.6 L3.8,5.9 L9.1,0 L10,0.9 L3.9,10.2 Z"/></svg></div><div class="c k" style="left:1780px;width:70px"></div><div class="c k" style="left:1850px;width:11px;text-align:left;padding-left:6px"></div></div>
<div class="ind" style="top:500px"></div>
<div class="r b" style="top:501px;height:22px"><div class="c d" style="left:0px;width:107px"><span>TS<i>20230816</i>-<i>2</i></span></div><div class="c" style="left:107px;width:276px"><span>INGRESSO INTEIRA (CANAL VENDA HOJE)</span></div><div class="c n d" style="left:383px;width:83px"><span><i>180</i>,<i>00</i></span></div><div class="c" style="left:466px;width:126px"><span>NÃO FATURAR</span></div><div class="c" style="left:592px;width:164px"><span>INGRESSO COMUM</span></div><div class="c" style="left:756px;width:164px"><span>INGRESSOS</span></div><div class="c" style="left:920px;width:288px"><span>TICKET STORE</span></div><div class="c" style="left:1208px;width:164px"></div><div class="c k" style="left:1372px;width:64px"></div><div class="c k" style="left:1436px;width:64px"></div><div class="c k" style="left:1500px;width:70px"><svg class="ck" viewBox="0 0 10 10"><path d="M0.1,3.7 L2.0,2.6 L3.8,5.9 L9.1,0 L10,0.9 L3.9,10.2 Z"/></svg></div><div class="c k" style="left:1570px;width:70px"></div><div class="c k" style="left:1640px;width:70px"></div><div class="c k" style="left:1710px;width:70px"><svg class="ck" viewBox="0 0 10 10"><path d="M0.1,3.7 L2.0,2.6 L3.8,5.9 L9.1,0 L10,0.9 L3.9,10.2 Z"/></svg></div><div class="c k" style="left:1780px;width:70px"></div><div class="c k" style="left:1850px;width:11px;text-align:left;padding-left:6px"></div></div>
<div class="ind" style="top:522px"></div>
<div class="r w" style="top:523px;height:23px"><div class="c d" style="left:0px;width:107px"><span>TS<i>202402</i></span></div><div class="c" style="left:107px;width:276px"><span>INGRESSO COM SESSÃO DO TICKET STORE</span></div><div class="c n d" style="left:383px;width:83px"><span><i>69</i>,<i>90</i></span></div><div class="c" style="left:466px;width:126px"><span>NÃO FATURAR</span></div><div class="c" style="left:592px;width:164px"><span>INGRESSO COMUM</span></div><div class="c" style="left:756px;width:164px"><span>INGRESSOS</span></div><div class="c" style="left:920px;width:288px"><span>INGRESSO TICKET STORE</span></div><div class="c" style="left:1208px;width:164px"><span>GRUPO SESSÃO TICKET</span></div><div class="c k" style="left:1372px;width:64px"></div><div class="c k" style="left:1436px;width:64px"></div><div class="c k" style="left:1500px;width:70px"><svg class="ck" viewBox="0 0 10 10"><path d="M0.1,3.7 L2.0,2.6 L3.8,5.9 L9.1,0 L10,0.9 L3.9,10.2 Z"/></svg></div><div class="c k" style="left:1570px;width:70px"></div><div class="c k" style="left:1640px;width:70px"></div><div class="c k" style="left:1710px;width:70px"><svg class="ck" viewBox="0 0 10 10"><path d="M0.1,3.7 L2.0,2.6 L3.8,5.9 L9.1,0 L10,0.9 L3.9,10.2 Z"/></svg></div><div class="c k" style="left:1780px;width:70px"></div><div class="c k" style="left:1850px;width:11px;text-align:left;padding-left:6px"></div></div>
<div class="ind" style="top:545px"></div>
<div class="r b" style="top:546px;height:22px"><div class="c d" style="left:0px;width:107px"><span>TS<i>202403</i></span></div><div class="c" style="left:107px;width:276px"><span>INGRESSO ROUND <i>7</i></span></div><div class="c n d" style="left:383px;width:83px"></div><div class="c" style="left:466px;width:126px"><span>NÃO FATURAR</span></div><div class="c" style="left:592px;width:164px"><span>INGRESSO COMUM</span></div><div class="c" style="left:756px;width:164px"><span>INGRESSOS</span></div><div class="c" style="left:920px;width:288px"><span>TICKET STORE</span></div><div class="c" style="left:1208px;width:164px"><span>GRUPO SESSÃO TICKET</span></div><div class="c k" style="left:1372px;width:64px"></div><div class="c k" style="left:1436px;width:64px"></div><div class="c k" style="left:1500px;width:70px"><svg class="ck" viewBox="0 0 10 10"><path d="M0.1,3.7 L2.0,2.6 L3.8,5.9 L9.1,0 L10,0.9 L3.9,10.2 Z"/></svg></div><div class="c k" style="left:1570px;width:70px"></div><div class="c k" style="left:1640px;width:70px"></div><div class="c k" style="left:1710px;width:70px"><svg class="ck" viewBox="0 0 10 10"><path d="M0.1,3.7 L2.0,2.6 L3.8,5.9 L9.1,0 L10,0.9 L3.9,10.2 Z"/></svg></div><div class="c k" style="left:1780px;width:70px"></div><div class="c k" style="left:1850px;width:11px;text-align:left;padding-left:6px"></div></div>
<div class="ind" style="top:567px"></div>
<div class="r w" style="top:568px;height:23px"><div class="c d" style="left:0px;width:107px"><span>TS<i>202404</i></span></div><div class="c" style="left:107px;width:276px"><span>INGRESSO <i>2025</i></span></div><div class="c n d" style="left:383px;width:83px"><span><i>99</i>,<i>99</i></span></div><div class="c" style="left:466px;width:126px"><span>NÃO FATURAR</span></div><div class="c" style="left:592px;width:164px"><span>INGRESSO COMUM</span></div><div class="c" style="left:756px;width:164px"><span>INGRESSOS</span></div><div class="c" style="left:920px;width:288px"><span>TICKET STORE</span></div><div class="c" style="left:1208px;width:164px"></div><div class="c k" style="left:1372px;width:64px"></div><div class="c k" style="left:1436px;width:64px"></div><div class="c k" style="left:1500px;width:70px"><svg class="ck" viewBox="0 0 10 10"><path d="M0.1,3.7 L2.0,2.6 L3.8,5.9 L9.1,0 L10,0.9 L3.9,10.2 Z"/></svg></div><div class="c k" style="left:1570px;width:70px"></div><div class="c k" style="left:1640px;width:70px"></div><div class="c k" style="left:1710px;width:70px"><svg class="ck" viewBox="0 0 10 10"><path d="M0.1,3.7 L2.0,2.6 L3.8,5.9 L9.1,0 L10,0.9 L3.9,10.2 Z"/></svg></div><div class="c k" style="left:1780px;width:70px"></div><div class="c k" style="left:1850px;width:11px;text-align:left;padding-left:6px"></div></div>
<div class="ind" style="top:590px"></div>
<div class="r b" style="top:591px;height:22px"><div class="c d" style="left:0px;width:107px"><span>TS<i>242406</i></span></div><div class="c" style="left:107px;width:276px"><span>INGRESSO MEIA ENTRADA - FESTIVAL</span></div><div class="c n d" style="left:383px;width:83px"><span><i>150</i>,<i>00</i></span></div><div class="c" style="left:466px;width:126px"><span>NÃO FATURAR</span></div><div class="c" style="left:592px;width:164px"><span>INGRESSO COMUM</span></div><div class="c" style="left:756px;width:164px"><span>INGRESSOS</span></div><div class="c" style="left:920px;width:288px"><span>ACESSO AO PARQUE</span></div><div class="c" style="left:1208px;width:164px"><span>GRUPO SESSÃO TICKET</span></div><div class="c k" style="left:1372px;width:64px"></div><div class="c k" style="left:1436px;width:64px"></div><div class="c k" style="left:1500px;width:70px"><svg class="ck" viewBox="0 0 10 10"><path d="M0.1,3.7 L2.0,2.6 L3.8,5.9 L9.1,0 L10,0.9 L3.9,10.2 Z"/></svg></div><div class="c k" style="left:1570px;width:70px"></div><div class="c k" style="left:1640px;width:70px"></div><div class="c k" style="left:1710px;width:70px"><svg class="ck" viewBox="0 0 10 10"><path d="M0.1,3.7 L2.0,2.6 L3.8,5.9 L9.1,0 L10,0.9 L3.9,10.2 Z"/></svg></div><div class="c k" style="left:1780px;width:70px"></div><div class="c k" style="left:1850px;width:11px;text-align:left;padding-left:6px"></div></div>
<div class="ind" style="top:612px"></div>
<div class="r w" style="top:613px;height:23px"><div class="c d" style="left:0px;width:107px"><span>TSNF<i>000001000</i></span></div><div class="c" style="left:107px;width:276px"><span>INGRESSO LA CASA DO INGRESSO</span></div><div class="c n d" style="left:383px;width:83px"><span><i>199</i>,<i>00</i></span></div><div class="c" style="left:466px;width:126px"><span>NÃO FATURAR</span></div><div class="c" style="left:592px;width:164px"><span>INGRESSO COMUM</span></div><div class="c" style="left:756px;width:164px"><span>INGRESSOS</span></div><div class="c" style="left:920px;width:288px"><span>INGRESSO INTEIRA</span></div><div class="c" style="left:1208px;width:164px"></div><div class="c k" style="left:1372px;width:64px"></div><div class="c k" style="left:1436px;width:64px"></div><div class="c k" style="left:1500px;width:70px"><svg class="ck" viewBox="0 0 10 10"><path d="M0.1,3.7 L2.0,2.6 L3.8,5.9 L9.1,0 L10,0.9 L3.9,10.2 Z"/></svg></div><div class="c k" style="left:1570px;width:70px"></div><div class="c k" style="left:1640px;width:70px"></div><div class="c k" style="left:1710px;width:70px"><svg class="ck" viewBox="0 0 10 10"><path d="M0.1,3.7 L2.0,2.6 L3.8,5.9 L9.1,0 L10,0.9 L3.9,10.2 Z"/></svg></div><div class="c k" style="left:1780px;width:70px"></div><div class="c k" style="left:1850px;width:11px;text-align:left;padding-left:6px"></div></div>
<div class="ind" style="top:635px"></div>
<div class="r b" style="top:636px;height:22px"><div class="c d" style="left:0px;width:107px"><span>TSNF<i>000001011</i></span></div><div class="c" style="left:107px;width:276px"><span>INGRESSO ROUND <i>6</i></span></div><div class="c n d" style="left:383px;width:83px"><span><i>170</i>,<i>00</i></span></div><div class="c" style="left:466px;width:126px"><span>NÃO FATURAR</span></div><div class="c" style="left:592px;width:164px"><span>INGRESSO COMUM</span></div><div class="c" style="left:756px;width:164px"><span>INGRESSOS</span></div><div class="c" style="left:920px;width:288px"><span>INGRESSO</span></div><div class="c" style="left:1208px;width:164px"></div><div class="c k" style="left:1372px;width:64px"></div><div class="c k" style="left:1436px;width:64px"></div><div class="c k" style="left:1500px;width:70px"><svg class="ck" viewBox="0 0 10 10"><path d="M0.1,3.7 L2.0,2.6 L3.8,5.9 L9.1,0 L10,0.9 L3.9,10.2 Z"/></svg></div><div class="c k" style="left:1570px;width:70px"></div><div class="c k" style="left:1640px;width:70px"></div><div class="c k" style="left:1710px;width:70px"><svg class="ck" viewBox="0 0 10 10"><path d="M0.1,3.7 L2.0,2.6 L3.8,5.9 L9.1,0 L10,0.9 L3.9,10.2 Z"/></svg></div><div class="c k" style="left:1780px;width:70px"></div><div class="c k" style="left:1850px;width:11px;text-align:left;padding-left:6px"></div></div>
<div class="ind" style="top:657px"></div>
<div class="r w" style="top:658px;height:23px"><div class="c d" style="left:0px;width:107px"><span>TST</span></div><div class="c" style="left:107px;width:276px"><span>INGRESSO JANEIRO</span></div><div class="c n d" style="left:383px;width:83px"><span><i>60</i>,<i>00</i></span></div><div class="c" style="left:466px;width:126px"><span>NÃO FATURAR</span></div><div class="c" style="left:592px;width:164px"><span>INGRESSO COMUM</span></div><div class="c" style="left:756px;width:164px"><span>INGRESSOS</span></div><div class="c" style="left:920px;width:288px"><span>INGRESSO TICKET STORE</span></div><div class="c" style="left:1208px;width:164px"><span>GRUPO SESSÃO TICKET</span></div><div class="c k" style="left:1372px;width:64px"></div><div class="c k" style="left:1436px;width:64px"></div><div class="c k" style="left:1500px;width:70px"><svg class="ck" viewBox="0 0 10 10"><path d="M0.1,3.7 L2.0,2.6 L3.8,5.9 L9.1,0 L10,0.9 L3.9,10.2 Z"/></svg></div><div class="c k" style="left:1570px;width:70px"></div><div class="c k" style="left:1640px;width:70px"></div><div class="c k" style="left:1710px;width:70px"><svg class="ck" viewBox="0 0 10 10"><path d="M0.1,3.7 L2.0,2.6 L3.8,5.9 L9.1,0 L10,0.9 L3.9,10.2 Z"/></svg></div><div class="c k" style="left:1780px;width:70px"></div><div class="c k" style="left:1850px;width:11px;text-align:left;padding-left:6px"></div></div>
<div class="ind" style="top:680px"></div>
<div class="r b" style="top:681px;height:22px"><div class="c d" style="left:0px;width:107px"><span>XPTO</span></div><div class="c" style="left:107px;width:276px"><span>ING MULT</span></div><div class="c n d" style="left:383px;width:83px"></div><div class="c" style="left:466px;width:126px"><span>NÃO FATURAR</span></div><div class="c" style="left:592px;width:164px"><span>INGRESSO COMUM</span></div><div class="c" style="left:756px;width:164px"><span>INGRESSOS</span></div><div class="c" style="left:920px;width:288px"><span>ETM ATRAÇÕES</span></div><div class="c" style="left:1208px;width:164px"></div><div class="c k" style="left:1372px;width:64px"></div><div class="c k" style="left:1436px;width:64px"></div><div class="c k" style="left:1500px;width:70px"><svg class="ck" viewBox="0 0 10 10"><path d="M0.1,3.7 L2.0,2.6 L3.8,5.9 L9.1,0 L10,0.9 L3.9,10.2 Z"/></svg></div><div class="c k" style="left:1570px;width:70px"></div><div class="c k" style="left:1640px;width:70px"></div><div class="c k" style="left:1710px;width:70px"></div><div class="c k" style="left:1780px;width:70px"></div><div class="c k" style="left:1850px;width:11px;text-align:left;padding-left:6px"></div></div>
<div class="ind" style="top:702px"></div>
<div class="r e" style="top:703px;height:23px"><div class="c d" style="left:0px;width:107px"></div><div class="c" style="left:107px;width:276px"></div><div class="c n d" style="left:383px;width:83px"></div><div class="c" style="left:466px;width:126px"></div><div class="c" style="left:592px;width:164px"></div><div class="c" style="left:756px;width:164px"><span></span></div><div class="c" style="left:920px;width:288px"></div><div class="c" style="left:1208px;width:164px"></div><div class="c k" style="left:1372px;width:64px"></div><div class="c k" style="left:1436px;width:64px"></div><div class="c k" style="left:1500px;width:70px"></div><div class="c k" style="left:1570px;width:70px"></div><div class="c k" style="left:1640px;width:70px"></div><div class="c k" style="left:1710px;width:70px"></div><div class="c k" style="left:1780px;width:70px"></div><div class="c k" style="left:1850px;width:11px;text-align:left;padding-left:6px"></div></div>
<div class="ind" style="top:725px"></div>
<div class="r e" style="top:726px;height:22px"><div class="c d" style="left:0px;width:107px"></div><div class="c" style="left:107px;width:276px"></div><div class="c n d" style="left:383px;width:83px"></div><div class="c" style="left:466px;width:126px"></div><div class="c" style="left:592px;width:164px"></div><div class="c" style="left:756px;width:164px"><span></span></div><div class="c" style="left:920px;width:288px"></div><div class="c" style="left:1208px;width:164px"></div><div class="c k" style="left:1372px;width:64px"></div><div class="c k" style="left:1436px;width:64px"></div><div class="c k" style="left:1500px;width:70px"></div><div class="c k" style="left:1570px;width:70px"></div><div class="c k" style="left:1640px;width:70px"></div><div class="c k" style="left:1710px;width:70px"></div><div class="c k" style="left:1780px;width:70px"></div><div class="c k" style="left:1850px;width:11px;text-align:left;padding-left:6px"></div></div>
<div class="ind" style="top:747px"></div>
<div class="r e" style="top:748px;height:23px"><div class="c d" style="left:0px;width:107px"></div><div class="c" style="left:107px;width:276px"></div><div class="c n d" style="left:383px;width:83px"></div><div class="c" style="left:466px;width:126px"></div><div class="c" style="left:592px;width:164px"></div><div class="c" style="left:756px;width:164px"><span></span></div><div class="c" style="left:920px;width:288px"></div><div class="c" style="left:1208px;width:164px"></div><div class="c k" style="left:1372px;width:64px"></div><div class="c k" style="left:1436px;width:64px"></div><div class="c k" style="left:1500px;width:70px"></div><div class="c k" style="left:1570px;width:70px"></div><div class="c k" style="left:1640px;width:70px"></div><div class="c k" style="left:1710px;width:70px"></div><div class="c k" style="left:1780px;width:70px"></div><div class="c k" style="left:1850px;width:11px;text-align:left;padding-left:6px"></div></div>
<div class="ind" style="top:770px"></div>
<div class="r e" style="top:771px;height:22px"><div class="c d" style="left:0px;width:107px"></div><div class="c" style="left:107px;width:276px"></div><div class="c n d" style="left:383px;width:83px"></div><div class="c" style="left:466px;width:126px"></div><div class="c" style="left:592px;width:164px"></div><div class="c" style="left:756px;width:164px"><span></span></div><div class="c" style="left:920px;width:288px"></div><div class="c" style="left:1208px;width:164px"></div><div class="c k" style="left:1372px;width:64px"></div><div class="c k" style="left:1436px;width:64px"></div><div class="c k" style="left:1500px;width:70px"></div><div class="c k" style="left:1570px;width:70px"></div><div class="c k" style="left:1640px;width:70px"></div><div class="c k" style="left:1710px;width:70px"></div><div class="c k" style="left:1780px;width:70px"></div><div class="c k" style="left:1850px;width:11px;text-align:left;padding-left:6px"></div></div>
<div class="ind" style="top:792px"></div>
<div class="r e" style="top:793px;height:23px"><div class="c d" style="left:0px;width:107px"></div><div class="c" style="left:107px;width:276px"></div><div class="c n d" style="left:383px;width:83px"></div><div class="c" style="left:466px;width:126px"></div><div class="c" style="left:592px;width:164px"></div><div class="c" style="left:756px;width:164px"><span></span></div><div class="c" style="left:920px;width:288px"></div><div class="c" style="left:1208px;width:164px"></div><div class="c k" style="left:1372px;width:64px"></div><div class="c k" style="left:1436px;width:64px"></div><div class="c k" style="left:1500px;width:70px"></div><div class="c k" style="left:1570px;width:70px"></div><div class="c k" style="left:1640px;width:70px"></div><div class="c k" style="left:1710px;width:70px"></div><div class="c k" style="left:1780px;width:70px"></div><div class="c k" style="left:1850px;width:11px;text-align:left;padding-left:6px"></div></div>
<div class="ind" style="top:815px"></div>
<div class="r e" style="top:816px;height:22px"><div class="c d" style="left:0px;width:107px"></div><div class="c" style="left:107px;width:276px"></div><div class="c n d" style="left:383px;width:83px"></div><div class="c" style="left:466px;width:126px"></div><div class="c" style="left:592px;width:164px"></div><div class="c" style="left:756px;width:164px"><span></span></div><div class="c" style="left:920px;width:288px"></div><div class="c" style="left:1208px;width:164px"></div><div class="c k" style="left:1372px;width:64px"></div><div class="c k" style="left:1436px;width:64px"></div><div class="c k" style="left:1500px;width:70px"></div><div class="c k" style="left:1570px;width:70px"></div><div class="c k" style="left:1640px;width:70px"></div><div class="c k" style="left:1710px;width:70px"></div><div class="c k" style="left:1780px;width:70px"></div><div class="c k" style="left:1850px;width:11px;text-align:left;padding-left:6px"></div></div>
<div class="ind" style="top:837px"></div>
<div class="r e" style="top:838px;height:23px"><div class="c d" style="left:0px;width:107px"></div><div class="c" style="left:107px;width:276px"></div><div class="c n d" style="left:383px;width:83px"></div><div class="c" style="left:466px;width:126px"></div><div class="c" style="left:592px;width:164px"></div><div class="c" style="left:756px;width:164px"><span></span></div><div class="c" style="left:920px;width:288px"></div><div class="c" style="left:1208px;width:164px"></div><div class="c k" style="left:1372px;width:64px"></div><div class="c k" style="left:1436px;width:64px"></div><div class="c k" style="left:1500px;width:70px"></div><div class="c k" style="left:1570px;width:70px"></div><div class="c k" style="left:1640px;width:70px"></div><div class="c k" style="left:1710px;width:70px"></div><div class="c k" style="left:1780px;width:70px"></div><div class="c k" style="left:1850px;width:11px;text-align:left;padding-left:6px"></div></div>
<div class="ind" style="top:860px"></div>
<div class="r e" style="top:861px;height:22px"><div class="c d" style="left:0px;width:107px"></div><div class="c" style="left:107px;width:276px"></div><div class="c n d" style="left:383px;width:83px"></div><div class="c" style="left:466px;width:126px"></div><div class="c" style="left:592px;width:164px"></div><div class="c" style="left:756px;width:164px"><span></span></div><div class="c" style="left:920px;width:288px"></div><div class="c" style="left:1208px;width:164px"></div><div class="c k" style="left:1372px;width:64px"></div><div class="c k" style="left:1436px;width:64px"></div><div class="c k" style="left:1500px;width:70px"></div><div class="c k" style="left:1570px;width:70px"></div><div class="c k" style="left:1640px;width:70px"></div><div class="c k" style="left:1710px;width:70px"></div><div class="c k" style="left:1780px;width:70px"></div><div class="c k" style="left:1850px;width:11px;text-align:left;padding-left:6px"></div></div>
<div class="ind" style="top:882px"></div>
<div style="left:21px;top:455px;width:1860px;height:23px;border:1px solid #0a6fd0"></div>
<svg style="left:13px;top:464px" width="6" height="10" viewBox="0 0 6 10"><path d="M0,0 L6,5 L0,10 Z" fill="#000"/></svg>
<div style="left:7px;top:866px;width:1885px;height:21px;background:#f0f0f0;border-top:1px solid #fbfbfb"></div>
<div style="left:1881px;top:148px;width:1px;height:719px;background:#fbfbfb"></div>
<div style="left:1882px;top:148px;width:10px;height:739px;background:#f0f0f0"></div>
<div style="left:1881px;top:147px;width:11px;height:1px;background:#b4b4b4"></div>
<div style="left:1889px;top:746px;width:3px;height:78px;background:#7d7d7d"></div>
<div style="left:9px;top:867px;width:5px;height:19px;background:#000"></div>
<div style="left:36px;top:876px;width:227px;height:2px;background:#8c8c8c"></div>
<div style="left:0;top:887px;width:1892px;height:1px;background:#fbfbfb"></div>
<div style="left:0;top:888px;width:1892px;height:7px;background:#b9d1ea"></div>
<div style="left:0;top:895px;width:1892px;height:2px;background:linear-gradient(#1b8a97,#0d5f6a)"></div>
<div class="menu" style="left:538px;top:461px;width:294px;height:440px">
<div class="mi" style="top:3px;letter-spacing:0.23px;"><b><u>A</u>lterar</b></div>
<div class="mi" style="top:27px;letter-spacing:0.33px;"><u>I</u>ncluir</div>
<div class="mi" style="top:51px;letter-spacing:0.21px;">Incl<u>u</u>ir Copiando</div>
<div class="mi" style="top:75px;"><u>E</u>xcluir</div>
<div class="mi" style="top:99px;letter-spacing:0.61px;"><u>Z</u>oom</div>
<div class="ms" style="top:126px;width:242px"></div>
<div class="mi" style="top:131px;letter-spacing:0.08px;"><u>D</u>esativar/Ativar</div>
<div class="ms" style="top:158px;width:242px"></div>
<div class="mi" style="top:163px;letter-spacing:0.25px;">Combo de produtos</div>
<div class="mi" style="top:187px;letter-spacing:0.05px;">Combo de produtos selecionáveis</div>
<div class="mi" style="top:211px;letter-spacing:0.16px;">Utilização em combo</div>
<div class="ms" style="top:238px;width:242px"></div>
<div class="mi" style="top:244px;letter-spacing:0.09px;">Configuração de Layout</div>
<div class="ms" style="top:271px;width:242px"></div>
<div class="mi" style="top:276px;letter-spacing:0.22px;">Configurar <u>t</u>ributação</div>
<div class="mi" style="top:300px;letter-spacing:0.22px;">Configurar <u>s</u>plit</div>
<div class="ms" style="top:327px;width:242px"></div>
<div class="mi" style="top:332px;letter-spacing:0.08px;">Gerenciamento comercial</div>
<div class="ms" style="top:383px;width:242px"></div>
<div class="mi" style="top:388px;letter-spacing:-0.08px;">Relativo ao</div>
<div class="mi" style="top:412px;letter-spacing:-0.33px;">Propriedades (CTRL+T)</div>
<div style="position:absolute;left:3px;top:356px;width:287px;height:24px;background:#0078d7"></div>
<div class="mi" style="top:356px;color:#fff;letter-spacing:-0.17px;">Ticket Store</div>
<svg style="position:absolute;left:274px;top:363px" width="6" height="10" viewBox="0 0 6 10"><path d="M0.3,0.3 L5.5,5 L0.3,9.7 Z" fill="#fff"/></svg>
<svg style="position:absolute;left:274px;top:395px" width="6" height="10" viewBox="0 0 6 10"><path d="M0.3,0.3 L5.5,5 L0.3,9.7 Z" fill="#000"/></svg>
</div>
<div class="menu" style="left:824px;top:774px;width:222px;height:130px">
<div style="position:absolute;left:3px;top:51px;width:214px;height:24px;background:#0078d7"></div>
<div class="mi" style="left:27px;top:3px;;letter-spacing:-0.2px;">Gerenciar Ticket <u>S</u>tore</div>
<div class="mi" style="left:27px;top:27px;;letter-spacing:0.25px;">Combo de produtos</div>
<div class="mi" style="left:27px;top:51px;color:#fff;letter-spacing:-0.02px;"><u>T</u>abela de preço por dia</div>
<div class="mi" style="left:27px;top:75px;;letter-spacing:-0.12px;">Cross Selling Produtos</div>
<div class="mi" style="left:27px;top:99px;;letter-spacing:0.17px;"><u>O</u>rdem dos produtos</div>
</div>
<div class="red" style="left:542px;top:808px;width:284px;height:35px"></div>
<div class="red" style="left:827px;top:820px;width:221px;height:33px"></div>
</body></html>
